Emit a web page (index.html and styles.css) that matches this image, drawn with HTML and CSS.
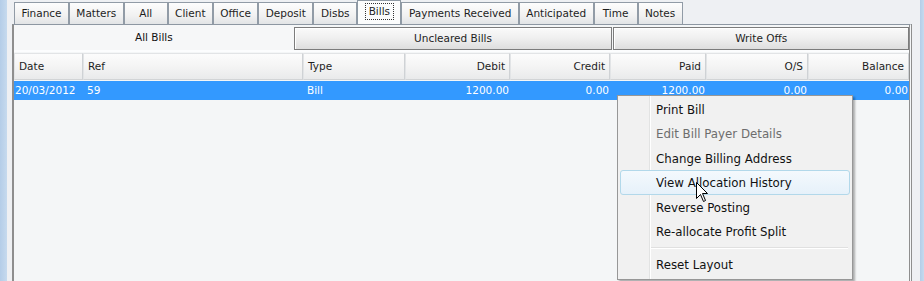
FILE: index.html
```html
<!doctype html>
<html>
<head>
<meta charset="utf-8">
<title>Bills</title>
<link rel="stylesheet" href="styles.css">
</head>
<body>
	<div class="frame">
		<div class="edge"></div>
		<div class="main">
			<ul class="tabs">
				<li>Finance</li>
				<li>Matters</li>
				<li>All</li>
				<li>Client</li>
				<li>Office</li>
				<li>Deposit</li>
				<li>Disbs</li>
				<li class="on"><span>Bills</span></li>
				<li>Payments Received</li>
				<li>Anticipated</li>
				<li>Time</li>
				<li>Notes</li>
			</ul>
			<div class="panel">
				<div class="subtabs">
					<div class="sub on">All Bills</div>
					<div class="sub btn mid">Uncleared Bills</div>
					<div class="sub btn last">Write Offs</div>
				</div>
				<div class="grid">
					<div class="row head">
						<div>Date</div>
						<div>Ref</div>
						<div>Type</div>
						<div class="num">Debit</div>
						<div class="num">Credit</div>
						<div class="num">Paid</div>
						<div class="num">O/S</div>
						<div class="num">Balance</div>
					</div>
					<div class="row sel">
						<div>20/03/2012</div>
						<div>59</div>
						<div>Bill</div>
						<div class="num">1200.00</div>
						<div class="num">0.00</div>
						<div class="num">1200.00</div>
						<div class="num">0.00</div>
						<div class="num">0.00</div>
					</div>
				</div>
			</div>
		</div>
		<div class="edge right"></div>
	</div>

	<div class="menu">
		<div class="item">Print Bill</div>
		<div class="item off">Edit Bill Payer Details</div>
		<div class="item">Change Billing Address</div>
		<div class="item hover">View Allocation History</div>
		<div class="item">Reverse Posting</div>
		<div class="item">Re-allocate Profit Split</div>
		<div class="sep"></div>
		<div class="item">Reset Layout</div>
	</div>

	<svg class="cursor" width="13" height="21" viewBox="0 0 13 21">
		<path d="M0.5 0.5 L0.5 16.5 L4.5 12.5 L7.5 19.5 L9.5 18.5 L6.5 11.5 L11.5 11.5 Z" fill="#fff" stroke="#000" stroke-width="1"/>
	</svg>
</body>
</html>
```

FILE: styles.css
```css
*{
	margin: 0;
	padding: 0;
	list-style: none;
	box-sizing: border-box;
}
body{
	background: #eef0f3;
	font-family: "DejaVu Sans", Verdana, sans-serif;
	font-size: 10.5px;
	color: #1e1e1e;
	overflow: hidden;
}
.frame{
	display: flex;
	height: 290px;
}
.edge{
	width: 7px;
	height: 281px;
	background: linear-gradient(to right, #b4cde8, #c6daee);
}
.edge.right{
	width: 4px;
	margin-left: 7px;
}
.main{
	width: 906px;
	padding-left: 5px;
	display: flex;
	flex-direction: column;
}
.tabs{
	display: flex;
	align-items: flex-end;
	height: 24px;
	padding-left: 2px;
}
.tabs li{
	height: 22px;
	min-width: 44px;
	padding: 0 6.4px;
	line-height: 20px;
	text-align: center;
	border: 1px solid #919ba6;
	border-bottom: none;
	background: linear-gradient(#fdfdfd, #f1f1f1 60%, #e2e4e6);
	white-space: nowrap;
}
.tabs li.on{
	height: 24px;
	line-height: 21px;
	background: #fbfcfc;
	border-color: #8e99a4;
}
.tabs li.on span{
	display: inline-block;
	line-height: 15px;
	padding: 0 3px;
	border: 1px dotted #333;
}
.panel{
	flex: 1;
	border-left: 2px solid #8e8e8e;
	border-top: 1px solid #8d97a2;
	border-right: 3px double #8e8e8e;
	background: #f4f6f7;
	width: 900px;
}
.subtabs{
	display: flex;
	height: 27px;
	border-bottom: 2px solid #fcfdfe;
}
.sub{
	text-align: center;
	line-height: 24px;
}
.sub.on{
	width: 280px;
	background: #f6f7f8;
	color: #111;
}
.sub.btn{
	margin-top: 2px;
	height: 23px;
	line-height: 20px;
	border: 1px solid #7c7c7c;
	background: linear-gradient(#fafafa, #f0f0f0 45%, #dedede);
	box-shadow: inset 1px 1px 0 #fff;
}
.sub.mid{
	width: 319px;
}
.sub.last{
	width: 296px;
	margin-left: 1px;
}
.grid{
	padding-top: 1px;
}
.row{
	display: grid;
	grid-template-columns: 69px 220px 102px 105px 100px 96px 102px 101px;
}
.row div{
	white-space: nowrap;
	overflow: hidden;
}
.head{
	height: 27px;
	margin-bottom: 1px;
}
.head div{
	line-height: 24px;
	padding: 0 4px;
	border: 1px solid #e2e4e6;
	border-right-color: #cfd2d5;
	border-bottom-color: #d2d4d6;
	background: linear-gradient(#fcfcfc, #f4f4f4 50%, #e9eaeb);
}
.head .num{
	text-align: right;
}
.sel{
	height: 19px;
	background: #3399ff;
	color: #fff;
	line-height: 19px;
}
.sel div{
	padding: 0 1px;
}
.sel .num{
	text-align: right;
}
.sel div:nth-child(2){
	padding-left: 4px;
}
.sel div:nth-child(3){
	padding-left: 4px;
}
.menu{
	position: absolute;
	left: 617px;
	top: 95px;
	width: 236px;
	height: 185px;
	padding: 1px 2px 0 2px;
	border: 1px solid #979797;
	background: linear-gradient(to right, #f1f1f1 31px, #e2e3e3 31px, #e2e3e3 32px, #fff 32px, #fff 33px, #f1f1f1 33px);
	box-shadow: 2px 2px 2px rgba(0,0,0,0.3);
	font-size: 11.8px;
	color: #111;
}
.item{
	height: 24.4px;
	line-height: 24px;
	padding-left: 35px;
	border: 1px solid transparent;
	border-radius: 3px;
	white-space: nowrap;
}
.item.off{
	color: #6d6d6d;
}
.item.hover{
	border-color: #b2d8ea;
	background: linear-gradient(#f4f9fd, #e6f1fa);
}
.sep{
	height: 5px;
	margin: 0 2px 4px 31px;
	border-bottom: 1px solid #e0e0e0;
	box-shadow: 0 1px 0 #fff;
}
.cursor{
	position: absolute;
	left: 696px;
	top: 182px;
}
```
